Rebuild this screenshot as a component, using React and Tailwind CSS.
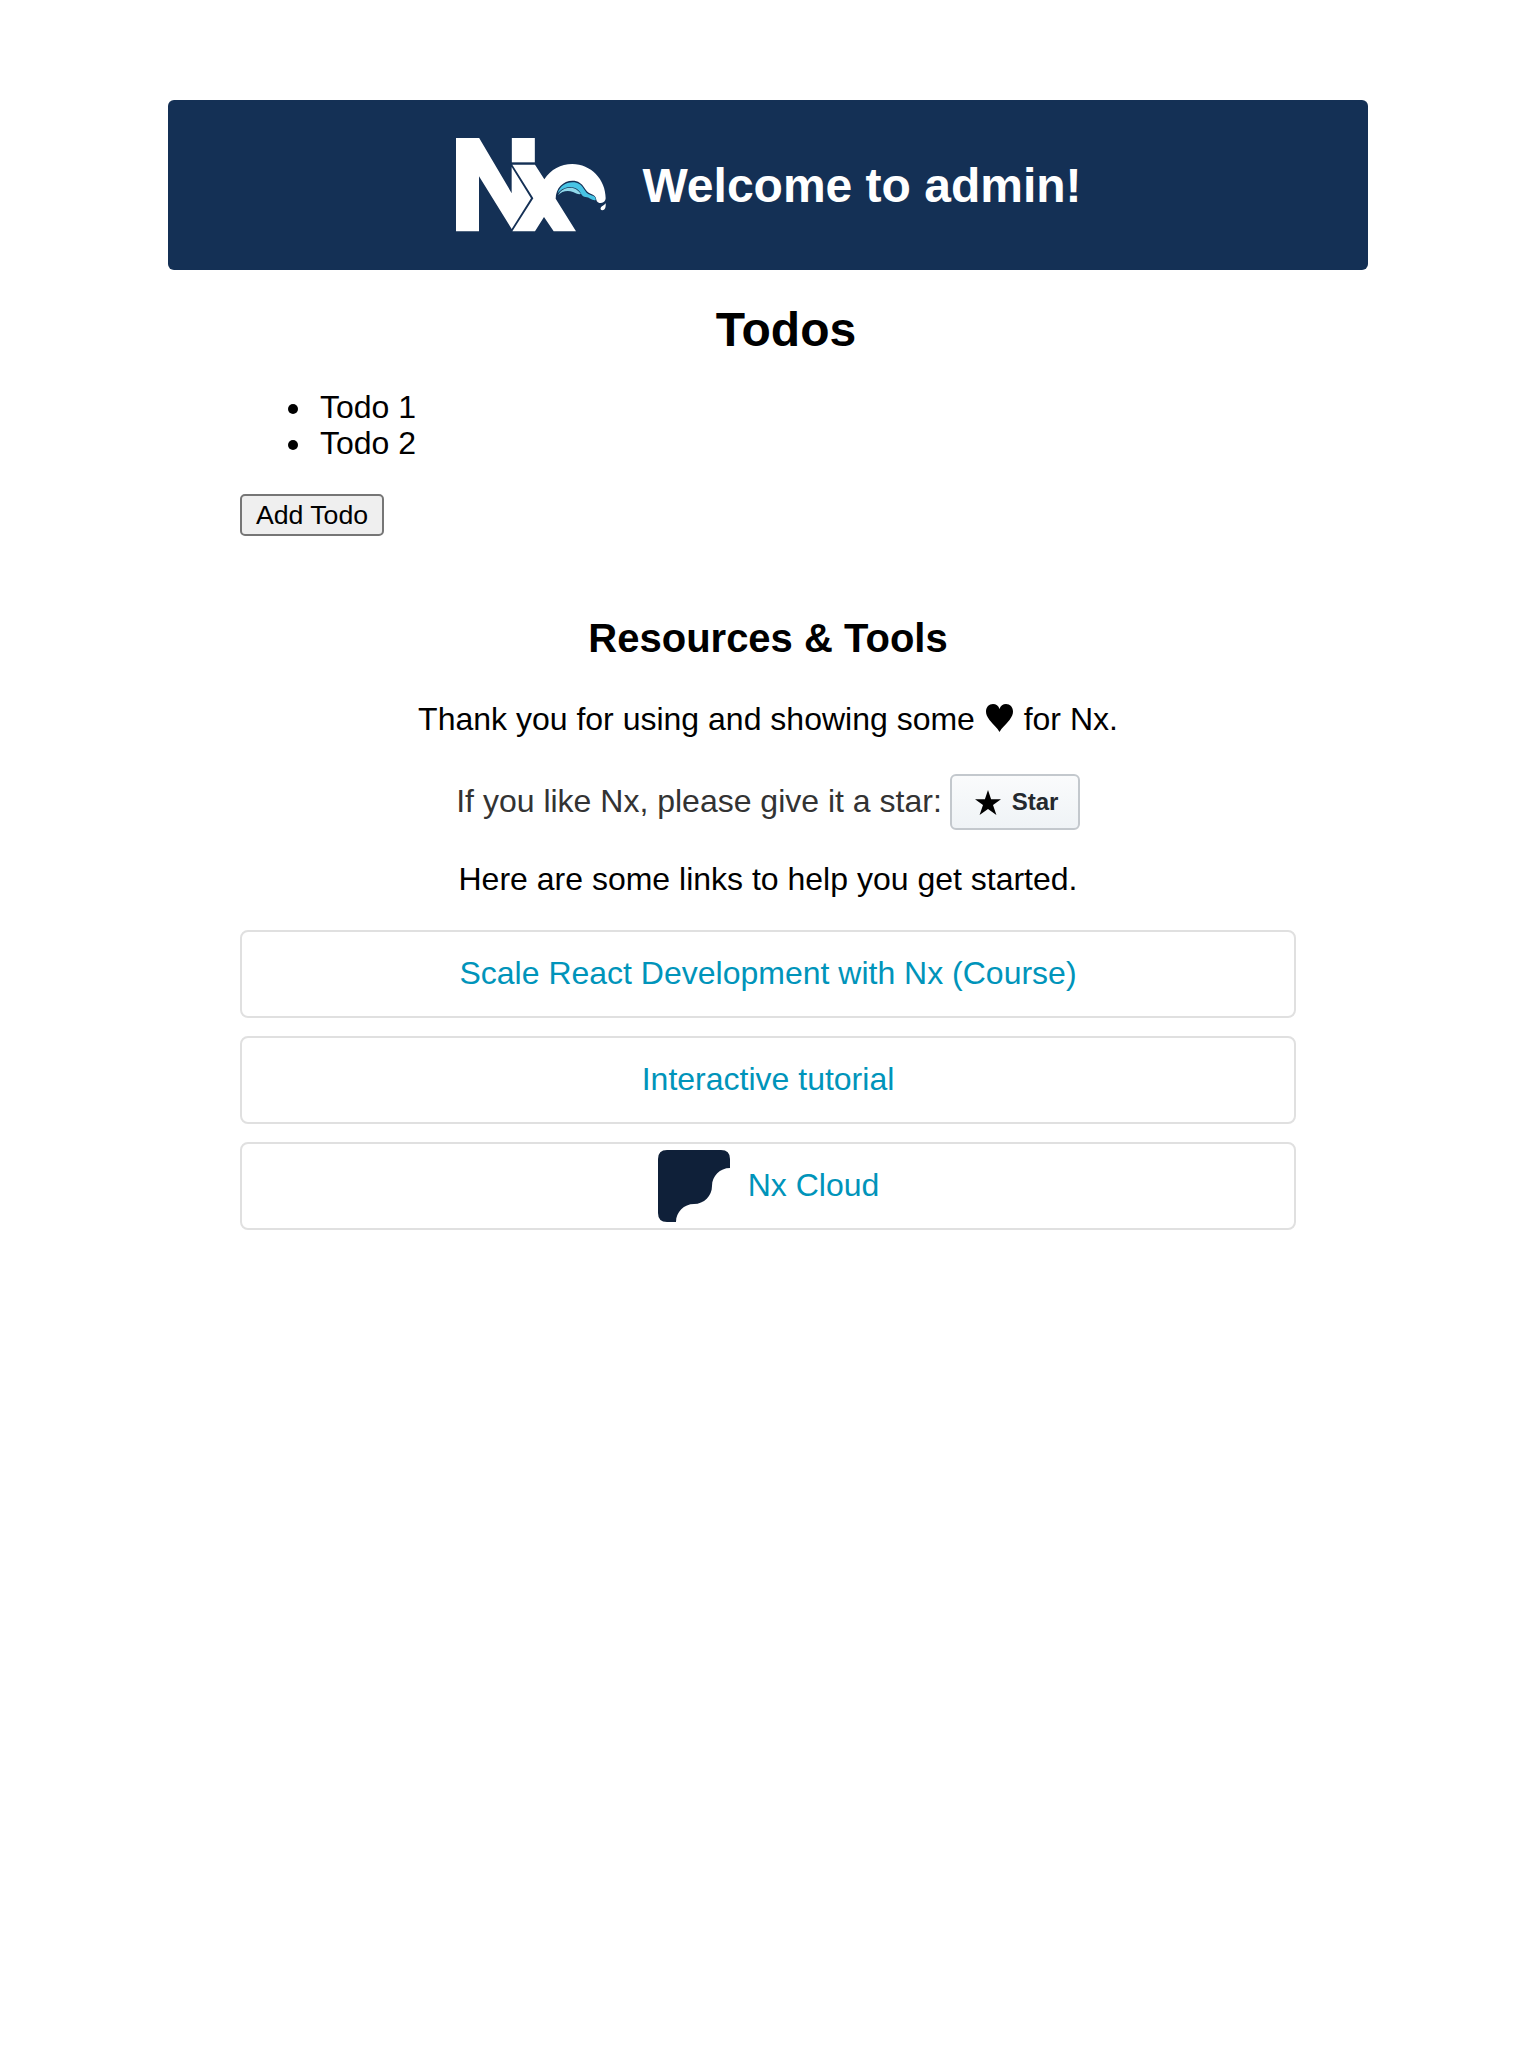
function NxLogo() {
  return (
    <svg width="150" height="94" viewBox="48 54 450 282" className="block shrink-0" fill="#fff" aria-label="Nx">
      <path d="M48 54H117.500L215 219.500V141L273 235L215 327L117 169V334H48Z" />
      <path d="M215.500 54H284.500V127H215.500Z" />
      <path d="M217 134H285L313 178C333 148 362 132 397 132C452 132 497 178 497 235C497 243 491 249 483 249C476 249 470 246 469 239C468 229 462 225 452 221C443 218 439 211 433 203C425 190 415 182 397 182C370 182 347 204 347 236L408 334H341L312 291L285 334H217L280 235Z" />
      <path d="M497 250C498 262 495 271 487 271C482 271 480 266 483 262C486 257 493 257 497 250Z" />
      <path fill="#48c4e5" d="M353 220C359 200 376 187 398 187C414 187 424 194 431 206C437 215 441 222 452 225C462 228 468 231 467 240C457 243 449 232 437 231C425 230 424 218 414 209C395 194 368 202 353 220Z" />
      <path fill="#90d8ea" d="M354 226C361 211 375 203 391 203C405 203 415 211 423 222C414 224 407 219 399 216C382 210 365 214 354 226Z" />
    </svg>
  );
}

function TodoItem({ children }) {
  return (
    <li className="flex items-center before:mt-1 before:mr-[22px] before:block before:size-[10px] before:rounded-full before:bg-black">
      {children}
    </li>
  );
}

function LinkCard({ children }) {
  return (
    <a className="flex h-[88px] items-center justify-center rounded-lg border-2 border-[#e0e0e0] text-[#0094ba]">
      {children}
    </a>
  );
}

export default function App() {
  return (
    <div className="mx-auto w-[1200px] pt-[100px] font-['Liberation_Sans',Arial,sans-serif] text-[32px] leading-9 text-black">
      <header className="flex h-[170px] items-center justify-center rounded-md bg-[#143055] pl-[2px] text-white">
        <NxLogo />
        <h1 className="ml-9 pt-[2px] text-[48px] leading-[56px] font-bold">Welcome to admin!</h1>
      </header>
      <main className="px-[72px]">
        <h1 className="mt-8 pl-9 text-center text-[48px] leading-[56px] font-bold">Todos</h1>
        <ul className="mt-[31px] pl-12">
          <TodoItem>Todo 1</TodoItem>
          <TodoItem>Todo 2</TodoItem>
        </ul>
        <button className="mt-[33px] block h-[42px] w-[144px] rounded-[5px] border-2 border-[#767676] bg-[#efefef] text-[26.667px] leading-[38px]">
          Add Todo
        </button>
        <h2 className="mt-[79px] text-center text-[40px] leading-[46px] font-bold">Resources &amp; Tools</h2>
        <p className="mt-10 text-center">
          Thank you for using and showing some{' '}
          <svg className="mx-[2px] inline-block align-[-2px]" width="27" height="28" viewBox="0 0 27 28">
            <path d="M13.500 28C11.500 24 7 20.500 3.500 16C1 12.500 0 10 0 7.500C0 3 3 0 7 0C10 0 12.500 1.800 13.500 5C14.500 1.800 17 0 20 0C24 0 27 3 27 7.500C27 10 26 12.500 23.500 16C20 20.500 15.500 24 13.500 28Z" />
          </svg>{' '}
          for Nx.
        </p>
        <div className="mt-9 flex items-center justify-center text-[#333]">
          <span className="-mt-[2px]">If you like Nx, please give it a star:</span>
          <span className="mt-px ml-2 flex h-14 w-[130px] items-center rounded-md border-2 border-[#c3c8cd] bg-linear-to-b from-[#fafbfc] to-[#eff3f6] pl-[23px] text-2xl font-bold text-[#24292e]">
            <svg width="26" height="25" viewBox="0 0 26 25" fill="#000">
              <path d="M13 0L16.100 9.200H26L18 15.100L21.400 25L13 19L4.600 25L8 15.100L0 9.200H9.900Z" />
            </svg>
            <span className="ml-[11px]">Star</span>
          </span>
        </div>
        <p className="mt-[31px] text-center">Here are some links to help you get started.</p>
        <nav className="mt-[33px] grid gap-[18px]">
          <LinkCard>
            <span className="mb-[2px]">Scale React Development with Nx (Course)</span>
          </LinkCard>
          <LinkCard>
            <span className="mb-[2px]">Interactive tutorial</span>
          </LinkCard>
          <LinkCard>
            <svg width="72" height="72" viewBox="0 0 72 72" className="mr-[18px] ml-px">
              <path fill="#0f2039" d="M9 0H63Q72 0 72 9V18C62 18 54 26 54 36C54 46 46 54 36 54C26 54 18 62 18 72H9Q0 72 0 63V9Q0 0 9 0Z" />
            </svg>
            <span className="mb-[2px]">Nx Cloud</span>
          </LinkCard>
        </nav>
      </main>
    </div>
  );
}
